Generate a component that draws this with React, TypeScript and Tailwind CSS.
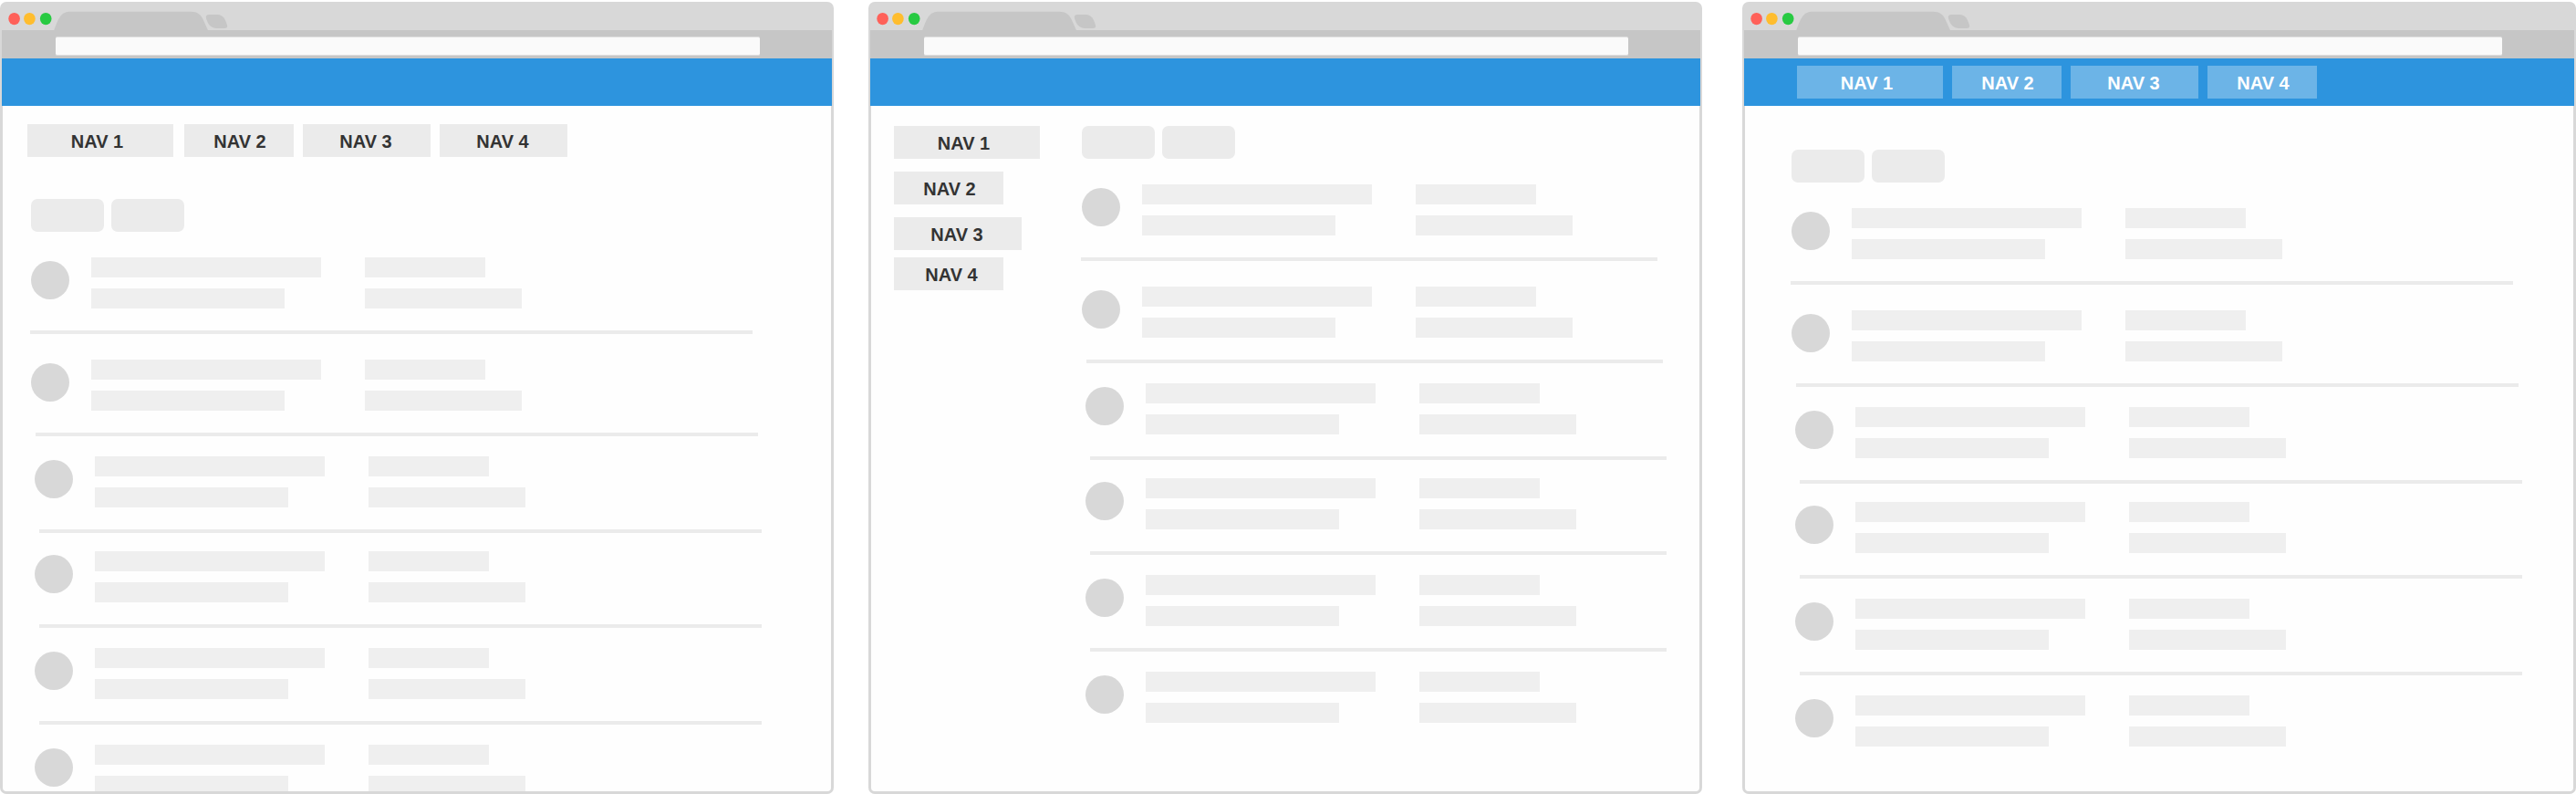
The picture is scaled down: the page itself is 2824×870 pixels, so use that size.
import type { ReactNode } from "react";

type NavItem = { label: string; size: string };

function NavBox({ label, className }: { label: string; className: string }) {
  return (
    <div
      className={`flex h-9 shrink-0 items-center justify-center pt-[2px] text-[20px] leading-none font-bold ${className}`}
    >
      {label}
    </div>
  );
}

function NavList({ items, className, tone }: { items: NavItem[]; className: string; tone: string }) {
  return (
    <nav className={`flex ${className}`}>
      {items.map((item) => (
        <NavBox key={item.label} label={item.label} className={`${item.size} ${tone}`} />
      ))}
    </nav>
  );
}

function BrowserWindow({ header, children }: { header?: ReactNode; children: ReactNode }) {
  return (
    <section className="flex h-[868px] w-[914px] shrink-0 flex-col overflow-hidden rounded-[7px] bg-[#d8d8d8]">
      <div className="h-[31px] shrink-0">
        <svg width="914" height="31" viewBox="0 0 914 31" className="block">
          <ellipse cx="15.6" cy="18.6" rx="6.3" ry="6.7" fill="#ff6159" />
          <ellipse cx="32.4" cy="18.6" rx="6.3" ry="6.7" fill="#ffbd2e" />
          <ellipse cx="50.2" cy="18.6" rx="6.3" ry="6.7" fill="#28ca42" />
          <path
            d="M59.3 31 C61 26 63 20.500 66 16 C69 12 72.500 10.7 78 10.7 H209 C216.500 10.7 220 14 222.500 19 L227.900 31 Z"
            fill="#c6c6c6"
          />
          <path
            d="M229.500 14 H238.500 C244.500 14 247 19 249 25.500 C249.500 28 248.500 29 246 29 H237.500 C230.500 29 227.500 23.500 226 18 C225.300 15.200 226.500 14 229.500 14 Z"
            fill="#c6c6c6"
          />
        </svg>
      </div>
      <div className="mx-0.5 h-[31px] shrink-0 bg-[#c6c6c6] pt-[7px] pl-[59px]">
        <div className="h-[21px] w-[772px] rounded-[2px] border-y border-[#dedede] bg-[#fafafa]" />
      </div>
      <header className="mx-0.5 h-[52px] shrink-0 bg-[#2d94de]">{header}</header>
      <main className="mx-[3px] mb-[3px] flex min-h-0 flex-1 items-start overflow-hidden rounded-b-[4px] bg-[#fefefe]">
        {children}
      </main>
    </section>
  );
}

function Buttons() {
  return (
    <div className="flex gap-2">
      <div className="h-9 w-20 rounded-[7px] bg-[#ebebeb]" />
      <div className="h-9 w-20 rounded-[7px] bg-[#ebebeb]" />
    </div>
  );
}

const rows = [
  { row: "pb-7", indent: "", line: "-ml-px" },
  { row: "pb-[22px]", indent: "", line: "ml-[5px]" },
  { row: "pb-5", indent: "ml-1", line: "ml-[9px]" },
  { row: "pb-[22px]", indent: "ml-1", line: "ml-[9px]" },
  { row: "pb-[22px]", indent: "ml-1", line: "ml-[9px]" },
  { row: "", indent: "ml-1", line: "hidden" },
];

function RecordList({ lineWidth }: { lineWidth: string }) {
  return (
    <div className="flex flex-col pt-7">
      {rows.map(({ row, indent, line }, index) => (
        <div key={index} className={row}>
          <div className={`flex ${indent}`}>
            <div className="mt-1 mr-6 size-[42px] rounded-full bg-[#d8d8d8]" />
            <div className="flex w-[300px] flex-col gap-3">
              <div className="h-[22px] w-[252px] bg-[#efefef]" />
              <div className="h-[22px] w-[212px] bg-[#efefef]" />
            </div>
            <div className="flex flex-col gap-3">
              <div className="h-[22px] w-[132px] bg-[#efefef]" />
              <div className="h-[22px] w-[172px] bg-[#efefef]" />
            </div>
          </div>
          <div className={`mt-6 h-1 bg-[#ebebeb] ${lineWidth} ${line}`} />
        </div>
      ))}
    </div>
  );
}

const tabItems: NavItem[] = [
  { label: "NAV 1", size: "w-40 mr-3 pr-[7px]" },
  { label: "NAV 2", size: "w-[120px] mr-2.5 pl-0.5" },
  { label: "NAV 3", size: "w-[140px] mr-2.5 pr-0.5" },
  { label: "NAV 4", size: "w-[140px] pr-0.5" },
];

const sideItems: NavItem[] = [
  { label: "NAV 1", size: "w-40 mb-3.5 pr-[7px]" },
  { label: "NAV 2", size: "w-[120px] mb-3.5 pl-0.5" },
  { label: "NAV 3", size: "w-[140px] mb-2 pr-0.5" },
  { label: "NAV 4", size: "w-[120px] pl-1.5" },
];

const barItems: NavItem[] = [
  { label: "NAV 1", size: "w-40 pr-[7px]" },
  { label: "NAV 2", size: "w-[120px] pl-0.5" },
  { label: "NAV 3", size: "w-[140px] pr-0.5" },
  { label: "NAV 4", size: "w-[120px] pl-0.5" },
];

export default function App() {
  return (
    <div className="flex h-[870px] w-[2824px] overflow-hidden bg-white pt-0.5 font-['Liberation_Sans',Arial,sans-serif]">
      <BrowserWindow>
        <div className="flex flex-col pt-5 pl-[27px]">
          <NavList items={tabItems} className="mb-[46px]" tone="bg-[#ebebeb] text-[#333333]" />
          <div className="ml-1">
            <Buttons />
            <RecordList lineWidth="w-[792px]" />
          </div>
        </div>
      </BrowserWindow>

      <div className="w-[38px] shrink-0" />

      <BrowserWindow>
        <div className="flex items-start pt-[22px] pl-[25px]">
          <NavList
            items={sideItems}
            className="w-[206px] shrink-0 flex-col"
            tone="bg-[#ebebeb] text-[#333333]"
          />
          <div>
            <Buttons />
            <RecordList lineWidth="w-[632px]" />
          </div>
        </div>
      </BrowserWindow>

      <div className="w-11 shrink-0" />

      <BrowserWindow
        header={
          <NavList items={barItems} className="gap-2.5 pt-2 pl-[58px]" tone="bg-[#6cb4e7] text-white" />
        }
      >
        <div className="pt-12 pl-[51px]">
          <Buttons />
          <RecordList lineWidth="w-[792px]" />
        </div>
      </BrowserWindow>
    </div>
  );
}
